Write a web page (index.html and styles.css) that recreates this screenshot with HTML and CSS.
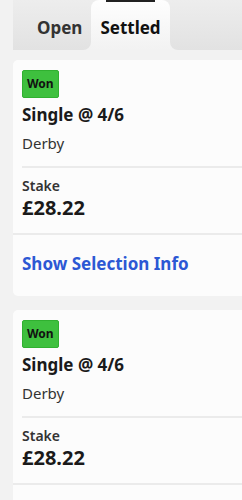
FILE: index.html
```html
<!DOCTYPE html>
<html>

<head>
    <title>My Bets</title>
    <link rel="stylesheet" href="styles.css">
</head>

<body>
    <div class="page">
        <!--Tabs-->
        <div class="tabs">
            <div class="tab">Open</div>
            <div class="tab tab-active">
                <div class="tab-mark"></div>
                <span>Settled</span>
            </div>
            <div class="tab-fill"></div>
        </div>

        <!--Bets-->
        <div class="bets">
            <div class="bet-card">
                <div class="bet-main">
                    <span class="badge-won">Won</span>
                    <div class="bet-title">Single @ 4/6</div>
                    <div class="bet-event">Derby</div>
                    <div class="bet-stake">
                        <div class="stake-label">Stake</div>
                        <div class="stake-value">£28.22</div>
                    </div>
                </div>
                <a href="#" class="bet-link">Show Selection Info</a>
            </div>

            <div class="bet-card">
                <div class="bet-main">
                    <span class="badge-won">Won</span>
                    <div class="bet-title">Single @ 4/6</div>
                    <div class="bet-event">Derby</div>
                    <div class="bet-stake">
                        <div class="stake-label">Stake</div>
                        <div class="stake-value">£28.22</div>
                    </div>
                </div>
                <div class="bet-rule"></div>
            </div>
        </div>
    </div>
</body>

</html>
```

FILE: styles.css
```css
  body {
      margin: 0;
      background-color: #f2f2f2;
      font-family: "Noto Sans", Arial, sans-serif;
      color: #1a1a1a;
  }

  .page {
      overflow: hidden;
      height: 500px;
  }

  /* Tabs */
  .tabs {
      display: flex;
      height: 50px;
      margin-left: 13px;
      background: linear-gradient(#ededed, #e3e3e3 40px, #f2f2f2 40px);
  }

  .tab {
      width: 78px;
      box-sizing: border-box;
      padding: 18px 0 0 24px;
      font-size: 17px;
      font-weight: bold;
      line-height: 20px;
      color: #333;
      background: linear-gradient(#ededed, #e2e2e2);
      border-bottom-right-radius: 8px;
  }

  .tab-active {
      width: 79px;
      padding: 0;
      text-align: center;
      color: #111;
      background: linear-gradient(#fefefe, #f2f2f2);
      border-radius: 8px 8px 0 0;
  }

  .tab-mark {
      width: 49px;
      height: 2px;
      margin: 0 0 16px 15px;
      background-color: #222;
  }

  .tab-fill {
      flex: 1;
      background: linear-gradient(#ededed, #e2e2e2);
      border-bottom-left-radius: 8px;
  }

  /* Bet cards */
  .bets {
      padding-top: 10px;
      margin-left: 13px;
      margin-right: -10px;
  }

  .bet-card {
      background-color: #fcfcfc;
      border-radius: 5px;
      margin-bottom: 14px;
  }

  .bet-main {
      padding: 10px 0 0 9px;
  }

  .badge-won {
      display: inline-block;
      padding: 5px 4px;
      font-size: 12px;
      font-weight: bold;
      line-height: 16px;
      color: #111;
      background-color: #3ec03e;
      border: 1px solid #30b030;
      border-radius: 2px;
  }

  .bet-title {
      margin-top: 5px;
      font-size: 17px;
      font-weight: bold;
      line-height: 24px;
  }

  .bet-event {
      margin-top: 6px;
      font-size: 15px;
      line-height: 20px;
      color: #333;
      padding-bottom: 13px;
      border-bottom: 2px solid #ebebeb;
  }

  .bet-stake {
      padding: 8px 0 12px;
  }

  .stake-label {
      font-size: 14px;
      font-weight: 600;
      line-height: 19px;
      color: #333;
  }

  .stake-value {
      font-size: 20px;
      font-weight: bold;
      line-height: 26px;
  }

  .bet-link {
      display: block;
      padding: 18px 9px 21px;
      border-top: 2px solid #ebebeb;
      font-size: 17px;
      font-weight: bold;
      line-height: 22px;
      color: #2c58d4;
      text-decoration: none;
  }

  .bet-rule {
      height: 60px;
      border-top: 2px solid #ebebeb;
  }
```
